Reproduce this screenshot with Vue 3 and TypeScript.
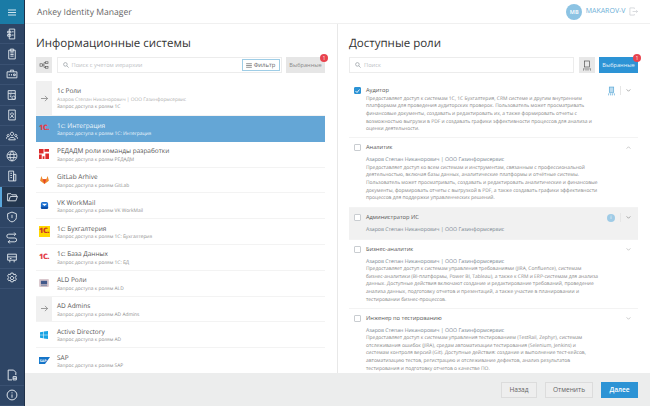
<script setup lang="ts">
const navTop = [
  'M6 2h10v18H6zM3 6h6v3H3zM3 12h6v3H3zM11 7h3M11 13h3',
  'M5 4h12v16H5zM8 2h6v4H8zM8 9h6M8 12h6M8 15h6',
  'M2 7h18v11H2zM8 7V4h6v3M6 11v3M10 11v3M14 11h3v3h-3z',
  'M4 3h13v16H4zM4 8h13M7 5.5h1M10 5.5h1M14 13a3 3 0 1 0 .01 0M7 11h3M7 14h3',
  'M5 2h12v18H5zM8 16c0-3 6-3 6 0M11 7a2.5 2.5 0 1 0 .01 0',
  'M11 4a3 3 0 1 0 .01 0M5 18c0-6 12-6 12 0zM4 8a2 2 0 1 0 .01 0M18 8a2 2 0 1 0 .01 0M1 16c0-3 1-4 3-4M21 16c0-3-1-4-3-4',
  'M11 2a9 9 0 1 0 .01 0M3 8h16M3 14h16M11 2c-5 5-5 13 0 18M11 2c5 5 5 13 0 18',
  'M5 2h9v18H5zM14 8h4v12h-4zM8 6h3M8 10h3M8 14h3',
  'M3 5h6l2 2h8v3M3 5v13h15l3-8H8l-3 8',
  'M11 2l8 3v7c0 4-4 7-8 8-4-1-8-4-8-8V5zM11 7v6',
  'M5 4h12M5 4a3.500 3.500 0 0 0 0 7h11a3.500 3.500 0 0 1 0 7H4M15 1l3 3-3 3M7 15l-3 3 3 3',
  'M3 4h16v11H3zM7 15v4M15 15v4M3 9h16M7 12h3',
  'M11 8a3 3 0 1 0 .01 0M9 2h4l1 3 3-1 2 3-2 3 2 3-2 3-3-1-1 3H9l-1-3-3 1-2-3 2-3-2-3 2-3 3 1z',
]

type Sys = { name: string; sub: string; logo: string; owner?: boolean; selected?: boolean }
const systems: Sys[] = [
  { name: '1с Роли', sub: 'Запрос доступа к ролям 1С', logo: 'arrow', owner: true },
  { name: '1с: Интеграция', sub: 'Запрос доступа к ролям 1С: Интеграция', logo: 'onec-red', selected: true },
  { name: 'РЕДАДМ роли команды разработки', sub: 'Запрос доступа к ролям РЕДАДМ', logo: 'red' },
  { name: 'GitLab Arhive', sub: 'Запрос доступа к ролям GitLab', logo: 'gitlab' },
  { name: 'VK WorkMail', sub: 'Запрос доступа к ролям VK WorkMail', logo: 'vk' },
  { name: '1с: Бухгалтерия', sub: 'Запрос доступа к ролям 1С: Бухгалтерия', logo: 'onec-yellow' },
  { name: '1с: База Данных', sub: 'Запрос доступа к ролям 1С: БД', logo: 'onec-red' },
  { name: 'ALD Роли', sub: 'Запрос доступа к ролям ALD', logo: 'ald' },
  { name: 'AD Admins', sub: 'Запрос доступа к ролям AD Admins', logo: 'arrow' },
  { name: 'Active Directory', sub: 'Запрос доступа к ролям AD', logo: 'win' },
  { name: 'SAP', sub: 'Запрос доступа к ролям SAP', logo: 'sap' },
]

const author = 'Азаров Степан Никанорович | ООО Газинформсервис'
type Role = { name: string; author?: boolean; desc?: string; checked?: boolean; open?: boolean; hover?: boolean; badge?: boolean; info?: boolean }
const roles: Role[] = [
  {
    name: 'Аудитор', checked: true, badge: true,
    desc: 'Предоставляет доступ к системам 1С, 1С Бухгалтерия, CRM системе и другим внутренним\nплатформам для проведения аудиторских проверок. Пользователь может просматривать\nфинансовые документы, создавать и редактировать их, а также формировать отчеты с\nвозможностью выгрузки в PDF и создавать графики эффективности процессов для анализа и\nоценки деятельности.',
  },
  {
    name: 'Аналитик', author: true, open: true,
    desc: 'Предоставляет доступ ко всем системам и инструментам, связанным с профессиональной\nдеятельностью, включая базы данных, аналитические платформы и отчётные системы.\nПользователь может просматривать, создавать и редактировать аналитические и финансовые\nдокументы, формировать отчеты с выгрузкой в PDF, а также создавать графики эффективности\nпроцессов для поддержки управленческих решений.',
  },
  { name: 'Администратор ИС', author: true, hover: true, info: true },
  {
    name: 'Бизнес-аналитик', author: true,
    desc: 'Предоставляет доступ к системам управления требованиями (JIRA, Confluence), системам\nбизнес-аналитики (BI-платформы, Power BI, Tableau), а также к CRM и ERP-системам для анализа\nданных. Доступные действия включают создание и редактирование требований, проведение\nанализа данных, подготовку отчетов и презентаций, а также участие в планировании и\nтестировании бизнес-процессов.',
  },
  {
    name: 'Инженер по тестированию', author: true,
    desc: 'Предоставляет доступ к системам управления тестированием (TestRail, Zephyr), системам\nотслеживания ошибок (JIRA), средам автоматизации тестирования (Selenium, Jenkins) и\nсистемам контроля версий (Git). Доступные действия: создание и выполнение тест-кейсов,\nавтоматизацию тестов, регистрацию и отслеживание дефектов, анализ результатов\nтестирования и подготовку отчетов о качестве ПО.',
  },
]
</script>

<template>
  <div class="app">
    <aside class="side">
      <div class="burger">
        <svg width="8" height="7" viewBox="0 0 8 7"><path d="M0 1h8M0 3.5h8M0 6h8" stroke="#cfe6f0" stroke-width="1" /></svg>
      </div>
      <div class="nav">
        <div v-for="(d, i) in navTop" :key="i" class="nav-item" :class="{ active: i === 8 }">
          <svg width="12" height="12" viewBox="0 0 22 22" fill="none" stroke="#dfe5ec" stroke-width="1.7" stroke-linejoin="round"><path :d="d" /></svg>
        </div>
      </div>
      <div class="nav-bottom">
        <div class="nav-item">
          <svg width="12" height="12" viewBox="0 0 22 22" fill="none" stroke="#dfe5ec" stroke-width="1.8"><path d="M4 2h10l4 4v5M4 2v18h7M13 14h6v6h-6zM13 17h6" /></svg>
        </div>
        <div class="nav-item">
          <svg width="12" height="12" viewBox="0 0 22 22" fill="none" stroke="#dfe5ec" stroke-width="1.8"><circle cx="11" cy="11" r="9" /><path d="M11 10v6M11 6v2" /></svg>
        </div>
      </div>
    </aside>

    <div class="main">
      <header class="top">
        <span class="brand">Ankey Identity Manager</span>
        <div class="user">
          <span class="avatar">MB</span>
          <span class="login">MAKAROV-V</span>
          <svg width="9" height="9" viewBox="0 0 10 10" fill="none" stroke="#c4c8cc" stroke-width=".7"><path d="M6 2V1H1v8h5V8M4 5h5.500M8 3.500L9.500 5 8 6.500" /></svg>
        </div>
      </header>

      <div class="panels">
        <section class="panel left">
          <h1>Информационные системы</h1>
          <div class="tools">
            <button class="square">
              <svg width="10" height="8" viewBox="0 0 12 10" fill="none" stroke="#555" stroke-width=".8"><rect x="1" y="3.500" width="3" height="3" /><rect x="8" y="1" width="3" height="2" /><rect x="8" y="7" width="3" height="2" /><path d="M4 5h2M6 2v6M6 2h2M6 8h2" /></svg>
            </button>
            <div class="search with-filter">
              <svg width="6" height="6" viewBox="0 0 8 8" fill="none" stroke="#9aa0a6"><circle cx="3.200" cy="3.200" r="2.400" /><path d="M5 5l2.500 2.500" /></svg>
              <span class="ph">Поиск с учетом иерархии</span>
              <span class="filter">
                <svg width="6" height="5" viewBox="0 0 8 7" stroke="#444" stroke-width=".8"><path d="M0 1h8M0 3.500h8M0 6h8" /></svg>
                Фильтр
              </span>
            </div>
            <button class="chosen grey">Выбранные<i>1</i></button>
          </div>
          <div class="list">
            <div v-for="s in systems" :key="s.name" class="sys" :class="{ sel: s.selected, tall: s.owner }">
              <div class="logo" :class="{ arrow: s.logo === 'arrow' }">
                <svg v-if="s.logo === 'arrow'" width="7" height="7" viewBox="0 0 8 8" fill="none" stroke="#666" stroke-width=".7"><path d="M0 4h7.500M4.500 1l3 3-3 3" /></svg>
                <span v-else-if="s.logo === 'onec-red'" class="onec red">1С.</span>
                <span v-else-if="s.logo === 'onec-yellow'" class="onec yellow">1С.</span>
                <svg v-else-if="s.logo === 'red'" width="10" height="10" viewBox="0 0 11 11" fill="#dd2b2b"><path d="M0 0h5v5H0zM6 0h5v3H6zM0 6h3v5H0zM4 8h2v3H4zM7 5h4v6H7z" /></svg>
                <svg v-else-if="s.logo === 'gitlab'" width="9" height="8" viewBox="0 0 11 10"><path d="M5.500 10L0 6l1.500-6L3.300 4h4.400L9.500 0 11 6z" fill="#f08a2c" /><path d="M5.500 10L3.300 4h4.400z" fill="#e2452a" /></svg>
                <svg v-else-if="s.logo === 'vk'" width="9" height="9" viewBox="0 0 10 10"><rect x="1" y="1" width="8" height="8" rx="2" fill="#1a6fd0" /><path d="M2 3h6L5 5.500z" fill="#fff" /><path d="M1 6.500h8v1A1.500 1.500 0 0 1 7.500 9h-5A1.500 1.500 0 0 1 1 7.500z" fill="#0c4ea8" /></svg>
                <svg v-else-if="s.logo === 'ald'" width="10" height="8" viewBox="0 0 11 9"><rect x="0" y="0" width="11" height="9" rx="1" fill="#d8c6cc" /><rect x="2" y="2" width="7" height="4" fill="#41598a" /><path d="M2 7h7v1H2z" fill="#7a88a5" /></svg>
                <svg v-else-if="s.logo === 'win'" width="8" height="8" viewBox="0 0 9 9" fill="#17a3e4"><path d="M0 1.300L3.700.8v3.300H0zM4.300.7L9 0v4.100H4.300zM0 4.800h3.700v3.400L0 7.700zM4.300 4.800H9V9l-4.700-.7z" /></svg>
                <svg v-else-if="s.logo === 'sap'" width="11" height="7" viewBox="0 0 11 7"><path d="M0 0h11L6 7H0z" fill="#1575c9" /><text x=".8" y="4.800" font-size="3.600" font-weight="700" fill="#fff" font-family="Open Sans">SAP</text></svg>
              </div>
              <div class="sys-text">
                <div class="sys-name">{{ s.name }}</div>
                <div v-if="s.owner" class="sys-sub owner">{{ author }}</div>
                <div class="sys-sub">{{ s.sub }}</div>
              </div>
            </div>
          </div>
        </section>

        <section class="panel right">
          <h1>Доступные роли</h1>
          <div class="tools">
            <div class="search">
              <svg width="6" height="6" viewBox="0 0 8 8" fill="none" stroke="#9aa0a6"><circle cx="3.200" cy="3.200" r="2.400" /><path d="M5 5l2.500 2.500" /></svg>
              <span class="ph">Поиск</span>
            </div>
            <button class="square ribbon">
              <svg width="8" height="11" viewBox="0 0 8 11" fill="none" stroke="#555" stroke-width=".7"><rect x="1.500" y="1" width="5" height="6" /><path d="M1 8l-.5 2.500M3 8v2.500M5 8v2.500M7 8l.5 2.500" /></svg>
            </button>
            <button class="chosen blue">Выбранные<i>1</i></button>
          </div>
          <div class="roles">
            <div v-for="r in roles" :key="r.name" class="role" :class="{ hover: r.hover, first: r.checked }">
              <span class="box" :class="{ on: r.checked }">
                <svg v-if="r.checked" width="5" height="4" viewBox="0 0 5 4" fill="none" stroke="#fff" stroke-width=".9"><path d="M.5 2l1.500 1.500L4.500.5" /></svg>
              </span>
              <div class="role-body">
                <div class="role-name">{{ r.name }}</div>
                <div v-if="r.author" class="role-author">{{ author }}</div>
                <div v-if="r.desc" class="role-desc">{{ r.desc }}</div>
              </div>
              <div class="role-acts">
                <svg v-if="r.badge" width="7" height="10" viewBox="0 0 8 11" fill="none" stroke="#5aa9d8" stroke-width=".8"><rect x="1.500" y="1" width="5" height="6" fill="#bcdcf0" /><path d="M1 8l-.5 2.500M3 8v2.500M5 8v2.500M7 8l.5 2.500" /></svg>
                <span v-if="r.info" class="info">i</span>
                <span v-if="r.badge || r.info" class="vsep"></span>
                <svg class="chev" width="5" height="3" viewBox="0 0 6 4" fill="none" :stroke="r.hover || r.checked ? '#666' : '#999'" stroke-width=".7"><path :d="r.open ? 'M.5 3.500L3 1l2.500 2.500' : 'M.5 .5L3 3l2.500-2.500'" /></svg>
              </div>
            </div>
          </div>
        </section>
      </div>

      <footer class="foot">
        <button class="btn">Назад</button>
        <button class="btn wide">Отменить</button>
        <button class="btn primary">Далее</button>
      </footer>
    </div>
  </div>
</template>

<style>
html, body { margin: 0; padding: 0; overflow: hidden; }
</style>

<style scoped>
.app {
  width: 650px; height: 406px; display: flex; overflow: hidden;
  font-family: "Open Sans", "Noto Sans", sans-serif; color: #333; background: #eceded;
  text-rendering: geometricPrecision;
}
.side { width: 24px; flex: none; background: #2e4565; border-right: 1px solid #1f3049; display: flex; flex-direction: column; }
.burger { height: 24px; background: #1a7ba6; display: flex; align-items: center; justify-content: center; }
.nav { flex: 1; display: flex; flex-direction: column; }
.nav-item { height: 20.400px; flex: none; display: flex; align-items: center; justify-content: center; border-bottom: .5px solid #3a5172; box-sizing: border-box; }
.nav-item.active { background: #24374f; box-shadow: inset 2px 0 0 #5aa7dc; }
.main { flex: 1; min-width: 0; display: flex; flex-direction: column; }
.top { height: 24px; flex: none; background: #fff; border-bottom: 1px solid #f0f0f0; box-sizing: border-box; display: flex; align-items: center; justify-content: space-between; padding: 0 12px 0 12px; }
.brand { font-size: 8.600px; color: #666; }
.user { display: flex; align-items: center; gap: 3.500px; }
.avatar { width: 16px; height: 16px; border-radius: 50%; background: #8cc3e3; color: #fff; font-size: 5.500px; font-weight: 600; display: flex; align-items: center; justify-content: center; }
.login { font-size: 7px; color: #6aaed6; }
.panels { flex: 1; min-height: 0; display: flex; gap: 1px; background: #e8e8e8; overflow: hidden; }
.panel { background: #fff; box-sizing: border-box; padding: 11px 12px 0 11px; overflow: hidden; }
.left { width: 312px; flex: none; }
.right { flex: 1; }
h1 { margin: 0; font-size: 11.500px; line-height: 18px; font-weight: 400; color: #333; }
.tools { display: flex; align-items: stretch; gap: 4.500px; height: 16px; margin-top: 4px; }
.square { width: 16px; flex: none; padding: 0; border: 0; background: #e8e8e8; display: flex; align-items: center; justify-content: center; }
.search { flex: 1; min-width: 0; border: 1px solid #ececec; box-sizing: border-box; display: flex; align-items: center; padding: 0 1px 0 5px; gap: 3px; }
.ph { font-size: 5.700px; color: #bcc0c4; flex: 1; }
.filter { border: 1px solid #9fcde6; font-size: 5.900px; height: 12px; width: 38px; justify-content: center; box-sizing: border-box; display: flex; align-items: center; gap: 2px; color: #666; }
.chosen { position: relative; border: 0; padding: 0; width: 39px; flex: none; font-family: inherit; font-size: 5.600px; }
.chosen.grey { background: #e6e6e6; color: #888; }
.chosen.blue { background: #2c93d5; color: #e9f4fb; }
.chosen i { position: absolute; top: -3.500px; right: -3px; width: 8px; height: 8px; border-radius: 50%; background: #e8434e; color: #fff; font-style: normal; font-size: 4.500px; line-height: 8px; text-align: center; }
.list { margin-top: 8px; }
.sys { height: 25.800px; display: flex; align-items: stretch; border-bottom: 1px solid #f3f3f3; box-sizing: border-box; }
.sys.tall { height: 35px; }
.sys.sel { background: #64a6d6; color: #fff; border-color: #64a6d6; }
.logo { width: 16px; flex: none; display: flex; align-items: center; justify-content: center; }
.logo.arrow { background: #f0f0f0; }
.onec { font-size: 7.500px; font-weight: 800; letter-spacing: -.5px; color: #e2404c; line-height: 10px; width: 11px; text-align: center; white-space: nowrap; }
.onec.yellow { background: #ffd800; color: #c9362a; height: 11px; line-height: 11px; }
.sys-text { padding: 4.500px 0 0 5px; min-width: 0; }
.sys-name { font-size: 6.500px; line-height: 9px; color: #555; }
.sys-sub { font-size: 4.850px; line-height: 7px; margin-top: 1.500px; color: #8e8e8e; white-space: nowrap; }
.sys-sub.owner { margin-top: 2.500px; color: #b0b0b0; }
.sys-sub.owner + .sys-sub { margin-top: 0; }
.sel .sys-name, .sel .sys-sub { color: #f2f8fc; }
.roles { margin-top: 8px; }
.role { display: flex; align-items: flex-start; padding: 5px 4px 0 5px; border-bottom: 1px solid #f3f3f3; box-sizing: border-box; }
.role:nth-child(1) { height: 57px; }
.role:nth-child(2) { height: 70px; }
.role:nth-child(3) { height: 31.500px; }
.role:nth-child(4) { height: 69px; }
.role.hover { background: #f1f1f1; }
.box { width: 7px; height: 7px; flex: none; box-sizing: border-box; border: .7px solid #c9cdd1; background: #fff; border-radius: 1px; margin-top: 1px; display: flex; align-items: center; justify-content: center; }
.box.on { background: #2c93d5; border-color: #2c93d5; }
.role-body { flex: 1; min-width: 0; padding-left: 5px; }
.role-name { font-size: 5.700px; line-height: 8px; color: #555; }
.role-author { font-size: 5.200px; line-height: 8px; color: #76838e; margin-top: 4px; }
.role-desc { font-size: 4.950px; line-height: 7.700px; color: #888; white-space: pre; margin-top: 1.500px; }
.role-acts { width: 30px; flex: none; display: flex; align-items: center; justify-content: flex-end; gap: 3px; height: 9px; padding-right: 3px; box-sizing: border-box; }
.vsep { width: 1px; height: 9px; background: #e6e6e6; margin: 0 2px; }
.info { width: 8px; height: 8px; border-radius: 50%; background: #9fcbe6; color: #fff; font-size: 5px; line-height: 8px; text-align: center; }
.foot { height: 33px; flex: none; background: #eceded; display: flex; align-items: center; justify-content: flex-end; gap: 8px; padding: 0 12px 0 0; box-sizing: border-box; }
.btn { height: 16px; width: 36px; border: 1px solid #dcdcdc; background: #eee; color: #666; font-family: inherit; font-size: 6.600px; padding: 0; }
.btn.wide { width: 48px; }
.btn.primary { width: 37px; background: #2c93d5; border-color: #2c93d5; color: #fff; font-weight: 600; }
</style>
